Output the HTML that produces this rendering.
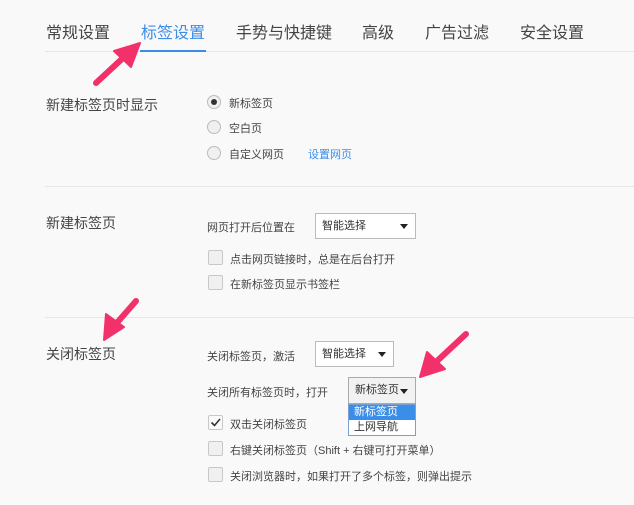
<!DOCTYPE html>
<html><head><meta charset="utf-8"><style>
body{margin:0;width:634px;height:505px;background:#f9f9f9;font-family:"Liberation Sans","Noto Sans CJK SC",sans-serif;color:#333;position:relative;overflow:hidden}
.a{position:absolute;white-space:nowrap}
.tab{font-size:16px;color:#444;top:19px}
.lbl{font-size:14px;color:#444}
.t{font-size:11px;color:#444}
.hr{position:absolute;height:1px;background:#e6e6e6;right:0}
.rad{position:absolute;width:12px;height:12px;border:1px solid #bbb;border-radius:50%;background:#f0f0f0}
.cb{position:absolute;width:13px;height:13px;border:1px solid #c8c8c8;border-radius:2px;background:#f0f0f0}
.sel{position:absolute;border:1px solid #bbb;background:#fff;font-size:11px;color:#333;box-sizing:border-box;padding-left:6px}
.sel:after{content:"";position:absolute;right:7px;top:50%;margin-top:-2px;border-left:4px solid transparent;border-right:4px solid transparent;border-top:5px solid #222}
</style></head><body>
<div class="a tab" style="left:46px">常规设置</div>
<div class="a tab" style="left:141px;color:#3b8ee8">标签设置</div>
<div class="a tab" style="left:236px">手势与快捷键</div>
<div class="a tab" style="left:362px">高级</div>
<div class="a tab" style="left:425px">广告过滤</div>
<div class="a tab" style="left:520px">安全设置</div>
<div class="hr" style="left:45px;top:51px"></div>
<div class="a" style="left:140px;top:50px;width:66px;height:2px;background:#3b8ee8"></div>

<div class="a lbl" style="left:46px;top:95px">新建标签页时显示</div>
<div class="rad" style="left:207px;top:95px"><div style="position:absolute;left:3px;top:3px;width:6px;height:6px;border-radius:50%;background:#333"></div></div>
<div class="a t" style="left:229px;top:95px">新标签页</div>
<div class="rad" style="left:207px;top:120px"></div>
<div class="a t" style="left:229px;top:120px">空白页</div>
<div class="rad" style="left:207px;top:146px"></div>
<div class="a t" style="left:229px;top:146px">自定义网页</div>
<div class="a t" style="left:308px;top:146px;color:#3b8ee8">设置网页</div>
<div class="hr" style="left:45px;top:186px"></div>

<div class="a lbl" style="left:46px;top:213px">新建标签页</div>
<div class="a t" style="left:207px;top:219px">网页打开后位置在</div>
<div class="sel" style="left:315px;top:213px;width:101px;height:26px;line-height:24px">智能选择</div>
<div class="cb" style="left:208px;top:250px"></div>
<div class="a t" style="left:230px;top:251px">点击网页链接时，总是在后台打开</div>
<div class="cb" style="left:208px;top:275px"></div>
<div class="a t" style="left:230px;top:276px">在新标签页显示书签栏</div>
<div class="hr" style="left:45px;top:317px"></div>

<div class="a lbl" style="left:46px;top:344px">关闭标签页</div>
<div class="a t" style="left:207px;top:348px">关闭标签页，激活</div>
<div class="sel" style="left:315px;top:341px;width:79px;height:26px;line-height:24px">智能选择</div>
<div class="a t" style="left:207px;top:384px">关闭所有标签页时，打开</div>
<div class="sel" style="left:348px;top:377px;width:68px;height:27px;line-height:25px;background:#f2f2f2;border-color:#aaa">新标签页</div>
<div class="a" style="left:348px;top:404px;width:68px;height:32px;border:1px solid #7aa0d0;box-sizing:border-box;background:#fff;font-size:11px">
<div style="background:#3b8ee8;color:#fff;height:15px;line-height:15px;padding-left:5px">新标签页</div>
<div style="height:15px;line-height:15px;padding-left:5px;color:#333">上网导航</div></div>
<div class="cb" style="left:208px;top:415px;background:#fafafa"><svg width="13" height="13" style="position:absolute;left:0;top:0"><path d="M2.5 6.5 L5.5 9.5 L11 3" stroke="#333" stroke-width="1.6" fill="none"/></svg></div>
<div class="a t" style="left:230px;top:416px">双击关闭标签页</div>
<div class="cb" style="left:208px;top:441px"></div>
<div class="a t" style="left:230px;top:442px">右键关闭标签页（Shift + 右键可打开菜单）</div>
<div class="cb" style="left:208px;top:467px"></div>
<div class="a t" style="left:230px;top:468px">关闭浏览器时，如果打开了多个标签，则弹出提示</div>

<svg width="634" height="505" style="position:absolute;left:0;top:0">
<g fill="#f2306a" stroke="#f2306a" stroke-linecap="round">
<line x1="96" y1="83" x2="124" y2="57" stroke-width="6"/>
<polygon points="140,43 114,51 131,67" stroke-width="2" stroke-linejoin="round"/>
<line x1="136" y1="301" x2="115" y2="325" stroke-width="6"/>
<polygon points="104,340 106,314 124,327" stroke-width="2" stroke-linejoin="round"/>
<line x1="466" y1="334" x2="436" y2="362" stroke-width="6"/>
<polygon points="420,377 427,352 445,369" stroke-width="2" stroke-linejoin="round"/>
</g></svg>
</body></html>
